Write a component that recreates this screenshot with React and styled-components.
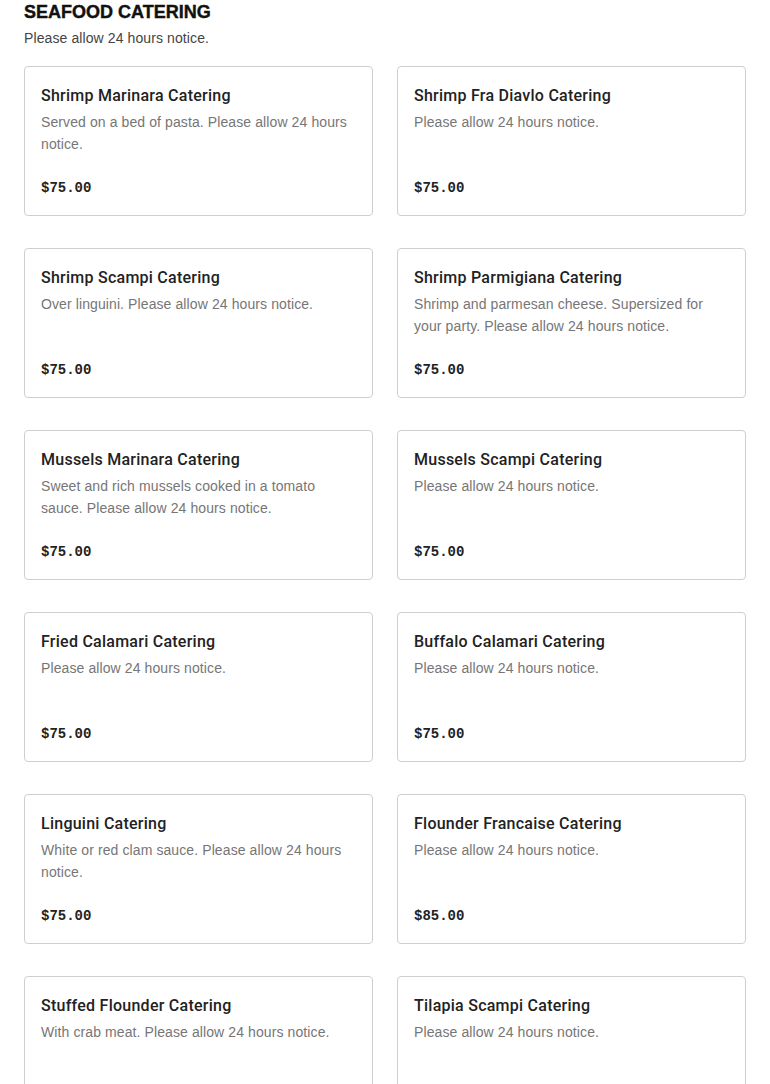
import React from 'react';
import styled, { createGlobalStyle } from 'styled-components';

const GlobalStyle = createGlobalStyle`
	body {
		margin: 0;
		background: #fff;
		font-family: "Liberation Sans", Arial, sans-serif;
		color: #222;
	}
`;

const Section = styled.section`
	padding: 0 24px 24px;
`;

const Heading = styled.h2`
	margin: 0;
	padding-top: 1px;
	font-size: 18px;
	line-height: 22px;
	font-weight: 900;
	color: #111;
	text-transform: uppercase;
	-webkit-text-stroke: 0.4px #111;
`;

const Subtitle = styled.p`
	margin: 5px 0 18px;
	font-size: 14px;
	line-height: 20px;
	letter-spacing: 0.1px;
	color: #444;
`;

const Grid = styled.div`
	display: grid;
	grid-template-columns: 1fr 1fr;
	column-gap: 24px;
	row-gap: 32px;
`;

const Card = styled.div`
	display: flex;
	flex-direction: column;
	min-height: 150px;
	box-sizing: border-box;
	padding: 17px 16px 17px;
	border: 1px solid #cfcfcf;
	border-radius: 4px;
	background: #fff;
`;

const Title = styled.h3`
	margin: 0 0 3px;
	font-family: Roboto, "Liberation Sans", sans-serif;
	font-size: 16px;
	line-height: 24px;
	font-weight: 500;
	letter-spacing: 0.25px;
	color: #222;
`;

const Description = styled.p`
	margin: 0;
	font-size: 14px;
	line-height: 22px;
	letter-spacing: 0.1px;
	color: #767676;
`;

const Price = styled.div`
	margin-top: auto;
	padding-top: 22px;
	font-family: "Liberation Mono", "Courier New", monospace;
	font-size: 14px;
	line-height: 20px;
	font-weight: 700;
	color: #222;
`;

const items = [
	{ name: 'Shrimp Marinara Catering', desc: 'Served on a bed of pasta. Please allow 24 hours notice.', price: '$75.00' },
	{ name: 'Shrimp Fra Diavlo Catering', desc: 'Please allow 24 hours notice.', price: '$75.00' },
	{ name: 'Shrimp Scampi Catering', desc: 'Over linguini. Please allow 24 hours notice.', price: '$75.00' },
	{ name: 'Shrimp Parmigiana Catering', desc: 'Shrimp and parmesan cheese. Supersized for your party. Please allow 24 hours notice.', price: '$75.00' },
	{ name: 'Mussels Marinara Catering', desc: 'Sweet and rich mussels cooked in a tomato sauce. Please allow 24 hours notice.', price: '$75.00' },
	{ name: 'Mussels Scampi Catering', desc: 'Please allow 24 hours notice.', price: '$75.00' },
	{ name: 'Fried Calamari Catering', desc: 'Please allow 24 hours notice.', price: '$75.00' },
	{ name: 'Buffalo Calamari Catering', desc: 'Please allow 24 hours notice.', price: '$75.00' },
	{ name: 'Linguini Catering', desc: 'White or red clam sauce. Please allow 24 hours notice.', price: '$75.00' },
	{ name: 'Flounder Francaise Catering', desc: 'Please allow 24 hours notice.', price: '$85.00' },
	{ name: 'Stuffed Flounder Catering', desc: 'With crab meat. Please allow 24 hours notice.', price: '$85.00' },
	{ name: 'Tilapia Scampi Catering', desc: 'Please allow 24 hours notice.', price: '$75.00' },
];

export default function App() {
	return (
		<>
			<GlobalStyle />
			<Section>
				<Heading>Seafood Catering</Heading>
				<Subtitle>Please allow 24 hours notice.</Subtitle>
				<Grid>
					{ items.map( item => (
						<Card key={ item.name }>
							<Title>{ item.name }</Title>
							<Description>{ item.desc }</Description>
							<Price>{ item.price }</Price>
						</Card>
					) ) }
				</Grid>
			</Section>
		</>
	);
}
